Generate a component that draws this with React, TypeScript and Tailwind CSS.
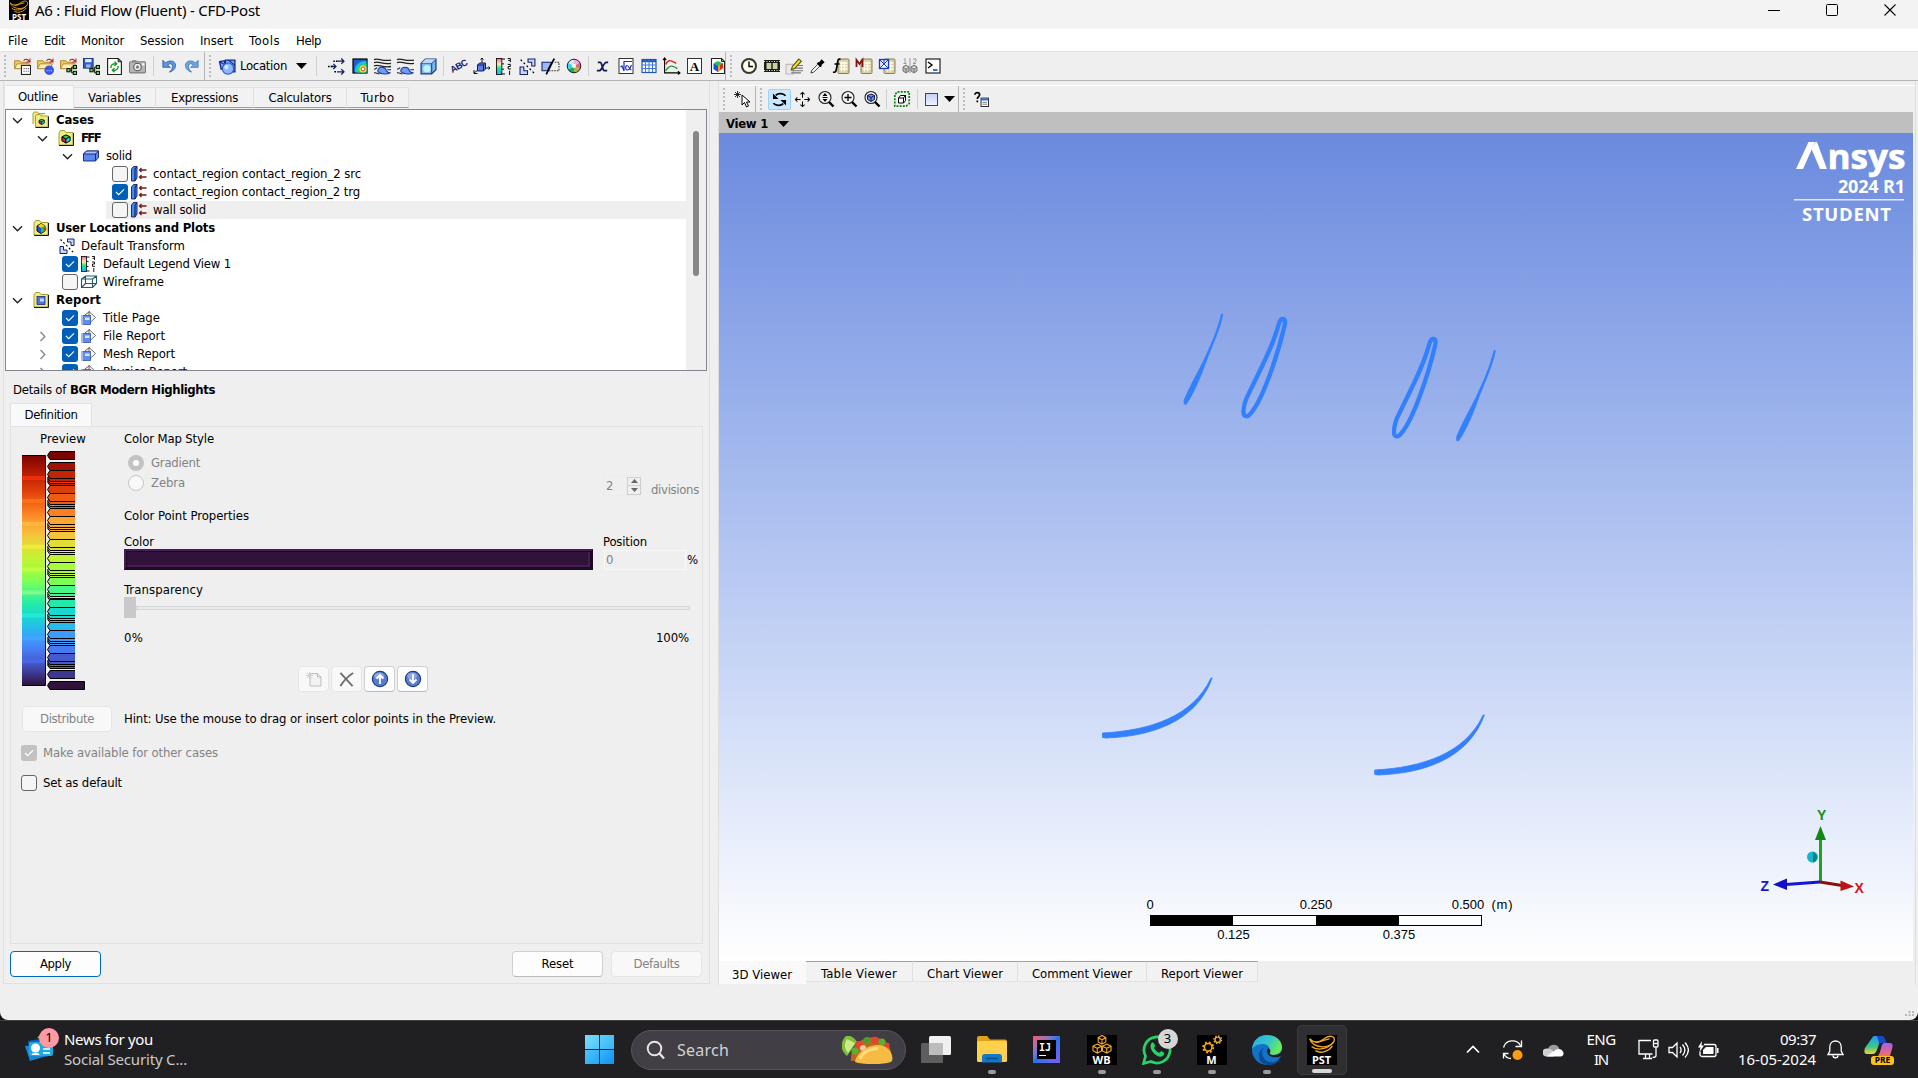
import { useLayoutEffect, useRef, useState, type ReactNode } from "react";

/* Text run that is tracked so that it fills a given width. */
function T({ w, children, className = "" }: { w?: number; children: string; className?: string }) {
  const ref = useRef<HTMLSpanElement>(null);
  const [ls, setLs] = useState(0);
  useLayoutEffect(() => {
    if (ref.current && w) {
      const range = document.createRange();
      range.selectNodeContents(ref.current);
      const natural = range.getBoundingClientRect().width - ls * children.length;
      setLs((w - natural) / children.length);
    }
  }, []);
  return (
    <span ref={ref} className={"inline-block shrink-0 whitespace-pre " + className} style={{ letterSpacing: ls }}>
      {children}
    </span>
  );
}

function Ico({ children, s = 17 }: { children: ReactNode; s?: number }) {
  return (
    <svg width={s} height={s} viewBox="0 0 16 16" fill="none" className="shrink-0 overflow-visible">
      {children}
    </svg>
  );
}

function Cell({ children }: { children: ReactNode }) {
  return <div className="flex w-[23px] shrink-0 items-center justify-center">{children}</div>;
}

function Sep({ className }: { className: string }) {
  return (
    <div className={"flex shrink-0 justify-center " + className}>
      <div className="h-5 w-px bg-[#cfcfcf]" />
    </div>
  );
}

function Grip() {
  return (
    <div className="flex h-6 w-[3px] shrink-0 flex-col justify-between py-[1px]">
      {[0, 1, 2, 3, 4, 5].map((i) => (
        <div key={i} className="h-[2px] w-[2px] bg-[#bcbcbc]" />
      ))}
    </div>
  );
}

function Caret() {
  return (
    <svg width="11" height="6" viewBox="0 0 11 6" className="shrink-0">
      <path d="M0 0H11L5.5 6Z" fill="#000" />
    </svg>
  );
}

const Folder = () => (
  <g>
    <path d="M0.5 2.5h5l1 1.500h6v6h-12z" fill="#f0c858" stroke="#a8832a" strokeWidth=".8" />
    <path d="M0.5 10L3 5.500h11.500L12 10z" fill="#ffeeb0" stroke="#a8832a" strokeWidth=".8" />
    <path d="M9 2.500c2-2 4-1.500 5.500 .8M15 0.500v3.200h-3.200" stroke="#c41616" />
  </g>
);
const Tree3 = () => (
  <g stroke="#000" strokeWidth=".9">
    <path d="M9 11.500h2M11 8.500v5.500M11 8.500h2M11 14h2" />
    <rect x="6.500" y="10" width="3" height="3" fill="#5ae05a" />
    <rect x="12.500" y="7" width="3" height="3" fill="#5ae05a" />
    <rect x="12.500" y="12.500" width="3" height="3" fill="#5ae05a" />
  </g>
);
const Sheet = () => (
  <g>
    <rect x="5" y="1" width="11" height="14.500" rx="1" fill="#d8d0a8" stroke="#8a8058" />
    <path d="M7 5h7.500M7 8h7.500M7 11h7.500M8.500 3.500v10M11.500 3.500v10" stroke="#fffbe6" strokeWidth="1.400" />
  </g>
);
const Swirl = ({ mid }: { mid: boolean }) => (
  <g>
    <path d="M0 1.500c4-2 7 2 16 .5M0 4.500c4-2.500 7 2 16 .5" stroke="#222" strokeWidth="1.200" />
    {mid && <path d="M0 7.500c4-2.500 7 2 16 .5" stroke="#222" strokeWidth="1.200" />}
    <path d="M3.500 12c1-4.500 7-4 8-.5 .8 2.500 3 2.500 4 2.500-4 2-11 1-12-2z" fill="#6f9cf6" stroke="#1c3f9e" />
    <path d="M0 10.500c1.500 0 2-.5 3-1.500M0 14c2-.5 3 1 5 1M12.500 11h3.500" stroke="#222" />
  </g>
);
const Transform = () => (
  <g>
    <path d="M8.500 1h6.500v6.500h-3v-3.500h-3.500z" fill="#c9d8fb" stroke="#14206b" />
    <path d="M1 8.500h3.500v3.500h3.500v3.500h-7z" fill="#c9d8fb" stroke="#14206b" />
    <path d="M1.500 1.500l13.500 13.500" stroke="#000" strokeDasharray="1.800 2.200" strokeWidth="1.200" />
  </g>
);
const Legend = () => (
  <g>
    <rect x="0.500" y="0.500" width="5" height="15" fill="url(#legendGrad)" stroke="#000" strokeWidth=".8" />
    <path d="M5.500 1h3M5.500 5.500h2M5.500 10.500h2M5.500 15h3" stroke="#000" strokeWidth=".9" />
    <path d="M11 .5h2.500v3.500M11.500 2.300h2M11 6h2.500v2h-2v2.300h2.500M12.800 12v4" stroke="#000" strokeWidth=".9" />
  </g>
);
const Lens = () => (
  <g>
    <circle cx="7" cy="6.500" r="6" fill="#f4f4f4" stroke="#222" strokeWidth="1.100" />
    <path d="M11 11l4.500 4.500" stroke="#000" strokeWidth="2.400" />
  </g>
);
const Cube = () => (
  <g stroke="#000" strokeWidth=".8">
    <path d="M8 5l4 1.800v4L8 13l-4-2.200v-4z" fill="#2a8" />
    <path d="M4 6.800L8 9v4l-4-2.200z" fill="#e21c5a" />
    <path d="M8 5l4 1.800L8 9 4 6.800z" fill="#2ed62e" />
    <path d="M12 6.800L8 9v4l4-2.200z" fill="#2bd3e8" />
  </g>
);
const YFolder = () => (
  <g>
    <path d="M1 3l1.500-2.500h4L8 2.500h7v12.500H1z" fill="#f1ea8a" stroke="#a8a22c" />
    <path d="M15.500 3v12.500H1" stroke="#000" strokeWidth=".9" />
  </g>
);
const Grid = () => (
  <g>
    <rect x="1" y="1.500" width="14" height="13" fill="#fff" stroke="#2456b4" strokeWidth="1.200" />
    <path d="M1 3h14" stroke="#2456b4" strokeWidth="2.500" />
    <path d="M1 7h14M1 10.500h14M4.500 2v12M8 2v12M11.500 2v12" stroke="#3b78d8" />
  </g>
);
const Page = () => (
  <g>
    <path d="M1.500 .5h10l3 3v12h-13z" fill="#fff" stroke="#222" strokeWidth="1.100" />
    <path d="M11.500 .5v3h3" stroke="#222" />
  </g>
);

function LeftTools() {
  return (
    <>
      <Cell><Ico><Folder /><rect x="7" y="7" width="8.500" height="8.500" fill="#fff" stroke="#222" /><path d="M9 10h5M9 12.500h5" stroke="#555" strokeDasharray="1 1" /></Ico></Cell>
      <Cell><Ico><Folder /><circle cx="11.500" cy="11.500" r="4.500" fill="#3a55e8" /><path d="M9 12h5" stroke="#cfe0ff" strokeDasharray="1 1" /></Ico></Cell>
      <Cell><Ico><Folder /><Tree3 /></Ico></Cell>
      <Cell><Ico><rect x=".5" y=".5" width="9" height="9" fill="#3460bd" stroke="#1d3f86" /><rect x="2" y="1" width="6" height="3" fill="#dfe9ff" /><rect x="3" y="6" width="4" height="3" fill="#9db8ee" /><Tree3 /></Ico></Cell>
      <Cell><Ico><Page /><path d="M4.500 9.500c0-3 2-4.500 5-4M8 3.500l2 2-2 2M11.500 7.500c0 3-2 4.500-5 4M8 9.500l-2 2 2 2" stroke="#169a28" strokeWidth="1.300" /></Ico></Cell>
      <Cell><Ico><rect x=".5" y="3.500" width="15" height="10.500" rx="1" fill="#b5b5b5" stroke="#7d7d7d" /><rect x="3" y="2" width="4" height="2" fill="#888" /><circle cx="8" cy="8.500" r="3.500" fill="#efefef" stroke="#555" /><circle cx="8" cy="8.500" r="1.500" fill="#777" /><rect x="12.500" y="5" width="2" height="2" fill="#fff" /></Ico></Cell>
    </>
  );
}

function Toolbar() {
  return (
    <div className="flex h-[30px] w-full shrink-0 items-center border-t border-b border-t-[#e2e2e2] border-b-[#b4b4b4] bg-[#efefef]">
      <div className="flex h-full w-[205px] items-center border-r border-[#b4b4b4] pl-[4px]">
        <Grip />
        <div className="w-[4px] shrink-0" />
        <LeftTools />
        <Sep className="w-[8px]" />
        <Cell><Ico s={14}><path d="M1 1.500v8h8.500L6.500 7C9 4.500 12 5 12 8.500c0 2.500-1.500 4.500-3.500 6.500 5-1.500 7-4.500 7-7.500C15.500 2 9 .5 4 4.500z" fill="#5d97dd" stroke="#2356a0" strokeWidth=".9" /></Ico></Cell>
        <Cell><Ico s={14}><path d="M15 1.500v8H6.500L9.500 7C7 4.500 4 5 4 8.500c0 2.500 1.500 4.500 3.500 6.500-5-1.500-7-4.500-7-7.500C.5 2 7 .5 12 4.500z" fill="#6ea6dc" stroke="#3a76ae" strokeWidth=".9" /></Ico></Cell>
      </div>
      <div className="flex h-full w-[521px] items-center border-r border-[#b4b4b4] pl-[4px]">
        <Grip />
        <div className="w-[7px] shrink-0" />
        <Ico><path d="M.5 3.500L5 2.500l1.500 7-4.500 1zM6 2h9v11H6z" fill="#7ba4f5" stroke="#0e2a86" strokeWidth="1.200" /><path d="M.5 3.500L5 6M9 2l6 5" stroke="#0e2a86" /><circle cx="8.500" cy="10" r="5.300" fill="#8db6ff" stroke="#2a56c4" /><circle cx="7" cy="8.500" r="2" fill="#d8e7ff" /></Ico>
        <T w={47} className="mr-[9px] ml-[4px]">Location</T>
        <Caret />
        <Sep className="w-[18px]" />
        <Cell><Ico><path d="M3 8h4.500M5 5.500L7.500 8 5 10.500M9 3h6M12.500 .5L15 3l-2.500 2.500M9 13h6M12.500 10.500L15 13l-2.500 2.500" stroke="#14206b" strokeWidth="1.200" /><path d="M0 8h4M5 3h4M6 13h3" stroke="#000" strokeDasharray="1.500 1" strokeWidth="1.300" /></Ico></Cell>
        <Cell><Ico s={16}><rect x="1" y="1" width="14" height="14" fill="#1e5fd0" stroke="#000" strokeWidth="1.200" /><path d="M3 14.500C2 7 7 3 14.500 3v11.500z" fill="#19c4d8" /><path d="M5.500 14.500C5 9 9 6 14.500 6v8.500z" fill="#3edb4a" /><circle cx="11" cy="11" r="3.500" fill="#f6e642" /><circle cx="11" cy="11" r="2" fill="#fff" stroke="#e0392a" /></Ico></Cell>
        <Cell><Ico><Swirl mid /></Ico></Cell>
        <Cell><Ico><Swirl mid={false} /></Ico></Cell>
        <Cell><Ico><path d="M1 5l4-4h10v10l-4 4H1z" fill="#7cb8ee" stroke="#1c3f8e" strokeWidth="1.200" /><path d="M1 5h10v10M11 5l4-4" stroke="#1c3f8e" /><circle cx="6.500" cy="10" r="3.500" fill="#c3f0fb" /><path d="M5 1h10l-4 4H1z" fill="#d5ecfb" opacity=".7" /></Ico></Cell>
        <Sep className="w-[7px]" />
        <Cell><span className="block -rotate-[28deg] font-['Liberation_Sans'] text-[9px] leading-none font-bold tracking-[-0.5px] text-[#14146e]">ABC</span></Cell>
        <Cell><Ico s={16}><path d="M8 5V0M6.500 1.500L8 0l1.500 1.500M11 10h5M14.500 8.500L16 10l-1.500 1.500M4 12l-4 3M0 12v3.500h3.500" stroke="#111" /><path d="M3.500 7l2-2h6v6l-2 2h-6z" fill="#5c80e6" stroke="#0e1e6b" /><path d="M3.500 7h6v6M9.500 7l2-2" stroke="#0e1e6b" /></Ico></Cell>
        <Cell><Ico><Legend /></Ico></Cell>
        <Cell><Ico><Transform /></Ico></Cell>
        <Cell><Ico><path d="M0 4h9l-4 8H0z" fill="#9db9f5" stroke="#14206b" /><path d="M12 4h4v8H6" stroke="#333" strokeDasharray="1.500 1" /><path d="M11.500 .5L4 15.500" stroke="#000" strokeWidth="1.600" /></Ico></Cell>
        <Cell>
          <Ico s={16}>
            <path d="M8 8L8 1A7 7 0 0 1 14 4.500z" fill="#f7a8e0" /><path d="M8 8L14 4.500A7 7 0 0 1 14 11.500z" fill="#f06080" /><path d="M8 8L14 11.500A7 7 0 0 1 8 15z" fill="#a8b844" /><path d="M8 8V15A7 7 0 0 1 2 11.500z" fill="#18a878" /><path d="M8 8L2 11.500A7 7 0 0 1 2 4.500z" fill="#38d8f0" /><path d="M8 8L2 4.500A7 7 0 0 1 8 1z" fill="#c8f0e8" /><circle cx="8" cy="8" r="6.800" stroke="#222" /><circle cx="8" cy="8" r="2" fill="#fff" />
          </Ico>
        </Cell>
        <Sep className="w-[6px]" />
        <Cell><Ico s={15}><path d="M3 3.500h2.500c2.500 0 2 9 4.500 9H13M14 3.500h-2C9 3.500 7.500 12.500 4.500 12.500H2" stroke="#101a50" strokeWidth="1.900" /></Ico></Cell>
        <Cell><Ico s={16}><rect x="1" y=".5" width="14" height="15" fill="#fff" stroke="#333" /><path d="M2.500 9l1.500-1 2 5V3.500h8" stroke="#1c30c8" strokeWidth="1.200" /><path d="M13.500 7c-2 5-3 5-4.500 5s-2-4.500 0-4.500 2.500 4.500 4.500 4.500" stroke="#1c30c8" strokeWidth="1.200" /></Ico></Cell>
        <Cell><Ico s={16}><Grid /></Ico></Cell>
        <Cell><Ico><path d="M1.500 0v14H16M0 2l1.500-2L3 2M14 12.500l2 1.500-2 1.500" stroke="#000" /><path d="M2.500 6c3-6 6-3 10-1" stroke="#d22" strokeWidth="1.300" /><path d="M2.500 12c4-6 7-5 11-2" stroke="#1a9a3a" strokeWidth="1.300" /></Ico></Cell>
        <Cell><div className="flex h-[16px] w-[15px] items-center justify-center border border-[#333] bg-white font-['Liberation_Serif'] text-[13px] leading-none font-bold">A</div></Cell>
        <Cell><Ico s={16}><Page /><path d="M4 5l4-2 4 2v6l-4 3-4-3z" fill="#1ec84a" /><path d="M3.500 5.500L8 8v6l-4.500-3z" fill="#1c50e0" /><path d="M8 8l5-3v5l-5 4z" fill="#f2a01c" /><path d="M10 7l3-2v5l-3 2z" fill="#e0281c" /></Ico></Cell>
      </div>
      <div className="flex h-full items-center pl-[4px]">
        <Grip />
        <div className="w-[4px] shrink-0" />
        <Cell><Ico s={16}><circle cx="8" cy="8" r="7" fill="#fffdf0" stroke="#3a3628" strokeWidth="2" /><path d="M8 3.500V8.500h4" stroke="#000" strokeWidth="1.400" /></Ico></Cell>
        <Cell><Ico s={16}><rect x="0" y="2" width="16" height="12" fill="#1c1c14" /><rect x="2.500" y="5" width="4.800" height="6" fill="#c9cfa6" /><rect x="8.700" y="5" width="4.800" height="6" fill="#c9cfa6" /><path d="M0 3.500h16M0 12.500h16" stroke="#e8e8d8" strokeDasharray="1 1.500" /></Ico></Cell>
        <Cell><Ico><path d="M0 6h7v9H0z" fill="#e8e8e8" stroke="#bbb" /><path d="M8 7h8M8 9.500h8M5 12h11M5 14h9" stroke="#777" /><path d="M5 11l1-3 6-7 2.500 2-6.500 7z" fill="#f4e21c" stroke="#5a5210" /></Ico></Cell>
        <Cell><Ico s={15}><path d="M1 15l1-3 6.500-6.500 2 2L4 14z" fill="#fff" stroke="#333" /><path d="M8 4l4 4M10 5l2.500-3 1.500 1.500L11 6z" stroke="#000" strokeWidth="2.200" /></Ico></Cell>
        <Cell><Ico s={16}><Sheet /><path d="M7.500 1.500C4.500 0 5 3 4 8s-1 7-4 6M1.500 6h5" stroke="#000" strokeWidth="1.700" /></Ico></Cell>
        <Cell><Ico s={16}><Sheet /><path d="M.5 9V2l3 4 3-4v7" stroke="#8a1010" strokeWidth="1.800" /></Ico></Cell>
        <Cell><Ico s={16}><Sheet /><rect x=".5" y="1.500" width="9" height="9" fill="#e8efff" stroke="#1c3cc8" strokeWidth="1.300" /><path d="M.5 1.500l9 9M9.500 1.500L5 6l-4.500 4.500M5 1.500V6" stroke="#1c3cc8" /></Ico></Cell>
        <Cell><Ico s={16}><path d="M2 1.500L3 .5v5M1.500 5.500h3M11 1h3v2l-3 2.500h3M8 0v15" stroke="#999" /><path d="M1 9l3-2 3 2v4l-3 2-3-2zM9 9l3-2 3 2v4l-3 2-3-2zM1 9l3 2 3-2M4 11v4M9 9l3 2 3-2M12 11v4" stroke="#777" fill="#bbb" /></Ico></Cell>
        <Cell><Ico s={16}><rect x="1" y="1" width="14" height="14" fill="#fff" stroke="#222" strokeWidth="1.200" /><path d="M3 4l4 3-4 3" stroke="#000" strokeWidth="1.400" /><path d="M8 12h4.500" stroke="#1466d8" strokeWidth="1.800" /></Ico></Cell>
      </div>
    </div>
  );
}

function Check({ on }: { on?: boolean }) {
  return on ? (
    <div className="flex h-4 w-4 shrink-0 items-center justify-center rounded-[3px] bg-[#005fb8]">
      <svg width="10" height="8" viewBox="0 0 10 8" fill="none"><path d="M1 4l2.700 2.700L9 1.300" stroke="#fff" strokeWidth="1.100" /></svg>
    </div>
  ) : (
    <div className="h-4 w-4 shrink-0 rounded-[3px] border border-[#666] bg-[#f5f5f5]" />
  );
}

function Chevron({ open }: { open: boolean }) {
  return (
    <svg width="11" height="11" viewBox="0 0 11 11" fill="none" className="shrink-0">
      <path d={open ? "M1 3.200l4.500 4.500L10 3.200" : "M3.500 1l4.300 4.500-4.300 4.500"} stroke={open ? "#222" : "#888"} strokeWidth="1.400" />
    </svg>
  );
}

const ICONS: Record<string, ReactNode> = {
  cases: <g><path d="M0 12V1.500L1 0h3.500l1 1.500H12" fill="#f1ea8a" stroke="#a8a22c" /><path d="M2.500 4l1-1.500H7L8 4h7v11H2.500z" fill="#f1ea8a" stroke="#a8a22c" /><path d="M15.500 4.500v11h-13" stroke="#000" strokeWidth=".9" /><g transform="translate(3.500 4) scale(.65)"><Cube /></g></g>,
  fff: <g><YFolder /><Cube /></g>,
  user: <g><YFolder /><path d="M4 6l4-2.500L12 6v5l-4 2.500L4 11z" fill="#1c50e0" stroke="#000" strokeWidth=".9" /><path d="M8 3.500L12 6 8 8 5 6z" fill="#f2d01c" /><path d="M8 8l4-2v5l-4 2z" fill="#1ec84a" /><circle cx="12" cy="9" r="1.500" fill="#e0281c" /></g>,
  report: <g><YFolder /><rect x="4" y="4.500" width="8" height="8" fill="#4878e0" stroke="#1c2f86" strokeWidth=".8" /><rect x="7" y="6.500" width="4" height="3" fill="#c7d8fb" /></g>,
  solid: <g stroke="#14206b" strokeWidth=".9"><path d="M.5 6l3-3h12v6.500l-3 3.500H.5z" fill="#5c88f0" /><path d="M.5 6l3-3h12l-3 3z" fill="#a9c4fa" /><path d="M12.500 6v7" /></g>,
  wall: <g><path d="M.5 3l2-2.500h3.500v11.500l-2 3H.5z" fill="#4a8af4" stroke="#0e1e5b" strokeWidth=".9" /><path d="M4 3v12M4 3l2-2.500" stroke="#0e1e5b" strokeWidth="1.100" /><path d="M8.500 4h7M8.500 11h7M10.500 2L8.500 4l2 2M10.500 9l-2 2 2 2" stroke="#7a1616" strokeWidth="1.300" /></g>,
  transform: <Transform />,
  legend: <Legend />,
  wire: <g stroke="#245a63" strokeWidth="1.100"><path d="M.5 5l4-3h11v7.500l-4 4H.5zM.5 5h11v8.500M11.500 5l4-3M4.500 2v7.500h11M4.500 9.500l-4 4" /></g>,
  page: <g><path d="M8 1.500l6.500 6-6.500 6z" fill="#fff" stroke="#555" strokeWidth=".9" /><path d="M8.500 1.500L4 5" stroke="#555" /><rect x="1" y="5.500" width="8.500" height="9" fill="#5f8cec" stroke="#2f56b4" strokeWidth=".8" /><path d="M1.500 5.500v9.500" stroke="#fff" strokeDasharray="1 1" /><rect x="4" y="7.500" width="4.500" height="2.500" fill="#dbe6fd" /></g>,
};

type Row = { pad: string; chev?: boolean; chevGap?: string; check?: boolean; icon: string; text: string; w: number; bold?: boolean; hl?: boolean };
const ROWS: Row[] = [
  { pad: "pl-[6px]", chev: true, icon: "cases", text: "Cases", w: 38, bold: true },
  { pad: "pl-[31px]", chev: true, icon: "fff", text: "FFF", w: 19, bold: true },
  { pad: "pl-[56px]", chev: true, icon: "solid", text: "solid", w: 26 },
  { pad: "pl-[106px]", check: false, icon: "wall", text: "contact_region contact_region_2 src", w: 208 },
  { pad: "pl-[106px]", check: true, icon: "wall", text: "contact_region contact_region_2 trg", w: 207 },
  { pad: "pl-[6px]", check: false, icon: "wall", text: "wall solid", w: 53, hl: true },
  { pad: "pl-[6px]", chev: true, icon: "user", text: "User Locations and Plots", w: 159, bold: true },
  { pad: "pl-[53px]", icon: "transform", text: "Default Transform", w: 104 },
  { pad: "pl-[56px]", check: true, icon: "legend", text: "Default Legend View 1", w: 128 },
  { pad: "pl-[56px]", check: false, icon: "wire", text: "Wireframe", w: 61 },
  { pad: "pl-[6px]", chev: true, icon: "report", text: "Report", w: 45, bold: true },
  { pad: "pl-[56px]", check: true, icon: "page", text: "Title Page", w: 57 },
  { pad: "pl-[31px]", chev: false, chevGap: "w-[14px]", check: true, icon: "page", text: "File Report", w: 62 },
  { pad: "pl-[31px]", chev: false, chevGap: "w-[14px]", check: true, icon: "page", text: "Mesh Report", w: 72 },
  { pad: "pl-[31px]", chev: false, chevGap: "w-[14px]", check: true, icon: "page", text: "Physics Report", w: 84 },
];

function Outline() {
  return (
    <div className="mx-px flex h-[262px] w-[702px] shrink-0 overflow-hidden border border-[#828790] bg-white">
      <div className="w-[680px] shrink-0 pt-px">
        {ROWS.map((r) => (
          <div key={r.text} className={"flex h-[18px] items-center " + (r.hl ? "ml-[100px] bg-[#efefef] " : "") + r.pad}>
            {r.chev !== undefined && <Chevron open={r.chev} />}
            {r.chev !== undefined && <div className={r.chevGap ?? "w-[10px]"} />}
            {r.check !== undefined && <Check on={r.check} />}
            <div className={r.check !== undefined ? "mr-[6px] ml-[3px]" : r.chev ? "mr-[7px]" : "mr-[6px]"}><Ico s={16}>{ICONS[r.icon]}</Ico></div>
            <T w={r.w} className={r.bold ? "font-bold" : ""}>{r.text}</T>
          </div>
        ))}
      </div>
      <div className="flex grow justify-center bg-[#efefef] pt-[21px]">
        <div className="h-[145px] w-[6px] rounded-[3px] bg-[#868686]" />
      </div>
    </div>
  );
}

function Tab({ children, w, className }: { children: string; w: number; className: string }) {
  return (
    <div className={"flex h-[21px] items-center justify-center border-t border-r border-b bg-[#f2f2f2] " + className}>
      <T w={w}>{children}</T>
    </div>
  );
}

const RAMP = ["#7a0403", "#a11201", "#c32503", "#dd3d08", "#f05b12", "#fb8022", "#fea431", "#f4c53a", "#dfdf37", "#c1f334", "#a4fc3c", "#7dff56", "#46f884", "#23eaac", "#18d9cb", "#28bbec", "#3e9bfe", "#467af3", "#455bcd", "#3e378f", "#30123b"];
const BANDS = ["#ff3010", "#ff7a1c", "#ffc040", "#f4f038", "#c8ff48", "#94ff90", "#24f0dc", "#44a8ff", "#4c68f0"];

function Preview() {
  const body = (y: number, h: number, c: string, key: string) => (
    <path key={key} d={`M75 ${y + 0.5}H50L47.500 ${y + h / 2}L50 ${y + h - 0.5}H75`} fill={c} stroke="#000" />
  );
  return (
    <svg width="68" height="242" viewBox="22 450 68 242" fill="none" className="mt-[-2px] ml-[11px]">
      <defs>
        <linearGradient id="ramp" x1="0" y1="0" x2="0" y2="1">
          {RAMP.map((c, i) => (
            <stop key={c} offset={i / (RAMP.length - 1)} stopColor={c} />
          ))}
        </linearGradient>
      </defs>
      <rect x="22" y="455" width="23" height="230" fill="url(#ramp)" />
      {BANDS.map((c, i) => (
        <rect key={c} x="22" y={476 + i * 22.9} width="23" height="4" fill={c} opacity=".75" />
      ))}
      <path d="M22 455.500h23.500v230H22" stroke="#000" />
      {body(451, 9, RAMP[0], "first")}
      {BANDS.map((c, i) => {
        const y = Math.round(462 + i * 22.9);
        const a = RAMP[1 + i * 2];
        const b = RAMP[2 + i * 2];
        return (
          <g key={c}>
            {[22, 20, 18].map((d, j) => body(y + d - 6, 8, j % 2 ? c : b, String(d)))}
            {body(y + 8, 9, b, "b")}
            {body(y, 9, a, "a")}
          </g>
        );
      })}
      {body(670, 9, "#3e378f", "p")}
      <path d="M84.500 681.500H50L47.500 685.500L50 689.500H84.500Z" fill="#30123b" stroke="#000" />
    </svg>
  );
}

function Btn({ children, className = "", dim }: { children: ReactNode; className?: string; dim?: boolean }) {
  return (
    <div className={"flex h-[26px] shrink-0 items-center justify-center rounded-[4px] border " + (dim ? "border-[#e6e6e6] bg-[#f8f8f8] text-[#838383] " : "border-[#d0d0d0] border-b-[#bababa] bg-[#fdfdfd] ") + className}>
      {children}
    </div>
  );
}

function RoundArrow({ d }: { d: string }) {
  return (
    <svg width="18" height="18" viewBox="0 0 18 18" fill="none">
      <circle cx="9" cy="9" r="7.600" fill="#5a7cd0" stroke="#1d3c86" strokeWidth="1.200" />
      <ellipse cx="8" cy="6" rx="5" ry="3.500" fill="#9fb6ee" opacity=".7" />
      <path d={d} stroke="#fff" strokeWidth="1.800" />
    </svg>
  );
}

function Details() {
  return (
    <div className="flex flex-1 flex-col pl-px">
      <div className="flex h-[32px] shrink-0 items-center gap-[4px] pt-[6px] pl-[8px]">
        <T w={53}>Details of</T>
        <T w={145} className="font-bold">BGR Modern Highlights</T>
      </div>
      <div className="ml-[5px] flex h-[23px] w-[82px] shrink-0 items-center justify-center border border-b-0 border-[#e2e2e2] bg-[#f9f9f9]">
        <T w={53}>Definition</T>
      </div>
      <div className="ml-[5px] flex h-[518px] w-[693px] shrink-0 flex-col border border-[#e2e2e2]">
        <div className="flex">
          <div className="flex w-[113px] shrink-0 flex-col items-start">
            <T w={46} className="ml-[29px] h-[25px] leading-[24px]">Preview</T>
            <Preview />
          </div>
          <div className="flex w-[577px] shrink-0 flex-col">
            <div className="flex h-[67px]">
              <div className="flex grow flex-col items-start">
                <T w={90} className="h-[26px] leading-[24px]">Color Map Style</T>
                <div className="flex h-[20px] items-center gap-[7px] pl-[4px] text-[#838383]">
                  <div className="h-4 w-4 rounded-full border-[5px] border-[#c2c2c2] bg-white" />
                  <T w={49}>Gradient</T>
                </div>
                <div className="flex h-[20px] items-center gap-[7px] pl-[4px] text-[#838383]">
                  <div className="h-4 w-4 rounded-full border border-[#c6c6c6] bg-[#f8f8f8]" />
                  <T w={34}>Zebra</T>
                </div>
              </div>
              <div className="flex items-start gap-[9px] pt-[48px] pr-[2px] text-[#838383]">
                <div className="flex h-[21px] w-[39px] items-center justify-between border border-[#ececec] pl-[2px]">
                  <span>2</span>
                  <div className="flex h-[18px] w-[14px] flex-col border border-[#cfcfcf]">
                    <div className="flex flex-1 items-center justify-center border-b border-[#cfcfcf]"><svg width="7" height="4"><path d="M0 4h7L3.500 0z" fill="#666" /></svg></div>
                    <div className="flex flex-1 items-center justify-center"><svg width="7" height="4"><path d="M0 0h7L3.500 4z" fill="#666" /></svg></div>
                  </div>
                </div>
                <T w={48} className="pt-[7px]">divisions</T>
              </div>
            </div>
            <T w={125} className="mt-[11px] h-[20px] self-start leading-[22px]">Color Point Properties</T>
            <div className="mt-[6px] flex h-[18px]">
              <T w={30} className="leading-[22px]">Color</T>
              <T w={44} className="ml-[449px] leading-[22px]">Position</T>
            </div>
            <div className="flex h-[21px] items-center">
              <div className="h-[21px] w-[469px] border-2 border-t-[#451c56] border-r-[#1c0a22] border-b-[#1c0a22] border-l-[#451c56] bg-[#1c0a22] p-px">
                <div className="h-full w-full border-r-2 border-b-2 border-[#451c56] bg-[#30123b]" />
              </div>
              <div className="ml-[11px] flex h-[20px] w-[82px] items-center border border-[#f8f8f8] pt-px pl-px text-[#838383]">0</div>
              <T w={12} className="ml-[1px] pt-px">%</T>
            </div>
            <T w={79} className="mt-[10px] h-[18px] self-start leading-[20px]">Transparency</T>
            <div className="mt-[-1px] flex h-[21px] w-[566px] items-center">
              <div className="h-[21px] w-[12px] bg-[#c9c9c9]" />
              <div className="h-[4px] grow border border-[#d3d6d6] bg-[#e7eaea]" />
            </div>
            <div className="mt-[10px] flex h-[20px] w-[565px] items-center justify-between">
              <T w={19}>0%</T>
              <T w={33}>100%</T>
            </div>
            <div className="mt-[18px] ml-[174px] flex gap-[2px]">
              <Btn dim className="w-[31px]"><Ico s={16}><path d="M4 2.500h7.500l3.500 3.500v9H4z" fill="#f3f3f3" stroke="#bdbdbd" /><path d="M11.500 2.500v3.500h3.500" stroke="#bdbdbd" /><path d="M3.500 1v7M0 4.500h7M1 2l5 5M6 2L1 7" stroke="#d0d0d0" /></Ico></Btn>
              <Btn dim className="w-[31px]"><Ico s={15}><path d="M1.500 1l13 14M15 1C9 5 5 9 1.500 15" stroke="#6e6e6e" strokeWidth="2" /></Ico></Btn>
              <Btn className="w-[31px]"><RoundArrow d="M9 14V5M5.500 8.500L9 5l3.500 3.500" /></Btn>
              <Btn className="w-[31px]"><RoundArrow d="M9 4v9M5.500 9.500L9 13l3.500-3.500" /></Btn>
            </div>
          </div>
        </div>
        <div className="mt-[14px] ml-[11px] flex items-center">
          <Btn dim className="w-[90px]"><T w={54}>Distribute</T></Btn>
          <T w={372} className="ml-[12px]">Hint: Use the mouse to drag or insert color points in the Preview.</T>
        </div>
        <div className="mt-[12px] ml-[10px] flex h-[18px] items-center gap-[6px] text-[#838383]">
          <div className="flex h-4 w-4 items-center justify-center rounded-[3px] bg-[#c2c2c2]">
            <svg width="10" height="8" viewBox="0 0 10 8" fill="none"><path d="M1 4l2.700 2.700L9 1.300" stroke="#fff" strokeWidth="1.300" /></svg>
          </div>
          <T w={175}>Make available for other cases</T>
        </div>
        <div className="mt-[12px] ml-[10px] flex h-[18px] items-center gap-[6px]">
          <Check />
          <T w={79}>Set as default</T>
        </div>
      </div>
      <div className="mt-[7px] ml-[5px] flex">
        <Btn className="w-[91px] !border-[#0067c0]"><T w={31}>Apply</T></Btn>
        <Btn className="ml-[411px] w-[91px]"><T w={32}>Reset</T></Btn>
        <Btn dim className="ml-[8px] w-[91px]"><T w={46}>Defaults</T></Btn>
      </div>
    </div>
  );
}

const BLADE = "M1221.500 314h1.300C1221 326 1213 344 1207 359C1201 376 1194 393 1186 404.500L1184.200 404V400C1190 386 1196 376 1203 362C1211 345 1217 332 1221.500 314z";
const LOOP = "M1282.500 319C1279 319 1279 325 1276 333C1270 352 1258 374 1249 393C1244 402 1243.500 407 1243.500 412C1243.500 417 1247.500 418 1251 413C1263 399 1278 354 1284.500 326C1285.500 322 1285.500 319 1282.500 319z";
const ARC = "M1102.500 733C1150 730.500 1193 716.500 1211 678H1212.200C1196 722.500 1150 736.500 1106 738L1102.500 737.500z";

function Viewer() {
  return (
    <svg width="1194" height="828" viewBox="719 133 1194 828" className="block shrink-0 bg-gradient-to-b from-[#6b8ade] to-white font-['Liberation_Sans'] text-[13px]">
      <g fill="#3380ff" stroke="#3380ff" strokeWidth=".8">
        <path d={BLADE} />
        <path d={BLADE} transform="translate(272.500 36.500)" />
        <path d={ARC} />
        <path d={ARC} transform="translate(272.200 37)" />
      </g>
      <g fill="none" stroke="#3380ff" strokeWidth="4.300">
        <path d={LOOP} />
        <path d={LOOP} transform="translate(150.500 20)" />
      </g>
      <g fill="#fff">
        <path d="M1796 169L1808.500 142h6.500L1803 169z" />
        <path d="M1811.500 149L1815.500 142h1.500L1827 169h-7z" />
        <rect x="1794" y="199" width="110" height="1.500" fill="#dfe6fa" />
        <g className="font-['Open_Sans'] font-bold">
          <text x="1827.500" y="169" fontSize="34" textLength="78" lengthAdjust="spacingAndGlyphs" stroke="#fff" strokeWidth=".6">nsys</text>
          <text x="1838" y="192.500" fontSize="18" textLength="67">2024 R1</text>
          <text x="1802" y="221" fontSize="18.500" textLength="89">STUDENT</text>
        </g>
      </g>
      <g>
        <text x="1150" y="909" textAnchor="middle">0</text>
        <text x="1316" y="909" textAnchor="middle">0.250</text>
        <text x="1468" y="909" textAnchor="middle">0.500</text>
        <text x="1502" y="909" textAnchor="middle" textLength="21">(m)</text>
        <text x="1233.500" y="939" textAnchor="middle">0.125</text>
        <text x="1399" y="939" textAnchor="middle">0.375</text>
        <rect x="1150.500" y="915.500" width="331" height="10" fill="#fff" fillOpacity=".6" stroke="#000" />
        <rect x="1150" y="915" width="83" height="11" />
        <rect x="1316" y="915" width="83" height="11" />
      </g>
      <g strokeWidth="3">
        <circle cx="1812.500" cy="857" r="5.500" fill="#12b8c8" />
        <path d="M1813 852a5.500 5.500 0 0 1 0 10.500z" fill="#0a7c88" />
        <path d="M1820.500 882V838" stroke="#22a022" />
        <path d="M1815 840L1820.500 826L1826 840z" fill="#118a11" />
        <path d="M1820 882L1786 884.500" stroke="#1414d8" />
        <path d="M1787 878.500L1773 884.500L1787 890z" fill="#1010c8" />
        <path d="M1820 882L1842 885.500" stroke="#8a1010" />
        <path d="M1840.500 880.500L1854 886.500L1840.500 891z" fill="#c01010" />
        <g className="font-bold" fontSize="14">
          <text x="1817" y="819.500" fill="#189018">Y</text>
          <text x="1760.500" y="891" fill="#1414d8">Z</text>
          <text x="1854.500" y="893" fill="#d81414">X</text>
        </g>
      </g>
    </svg>
  );
}

function ViewerPane() {
  return (
    <div className="ml-[8px] flex w-[1198px] flex-col border-r border-l border-[#dedede] pt-[4px]">
      <div className="flex h-[27px] shrink-0 items-center border-t border-white bg-[#efefef]">
        <div className="flex h-full w-[37px] items-center border-r border-[#b4b4b4] pl-[4px]">
          <Grip />
          <div className="ml-[8px]"><Ico s={16}><path d="M3.500 0v7M0 3.500h7M1 1l5 5M6 1L1 6" stroke="#000" strokeWidth=".8" /><path d="M8 4v10l2.500-2.500 2 4.500 2-1-2-4h3.500z" fill="#fff" stroke="#000" /></Ico></div>
        </div>
        <div className="flex h-full w-[203px] items-center border-r border-[#b4b4b4] pl-[4px]">
          <Grip />
          <div className="ml-[5px] flex h-[21px] w-[23px] shrink-0 items-center justify-center rounded-[2px] border border-[#99d1ff] bg-[#cce8ff]">
            <Ico s={15}><path d="M4 3.500C7 .5 12 1.500 14.500 4M12 12.500C9 15.500 4 14.500 1.500 12" stroke="#000" strokeWidth="1.800" /><path d="M1 1.500v6h6zM15 14.500v-6H9z" fill="#000" /></Ico>
          </div>
          <Cell><Ico s={15}><path d="M8 0v6M8 10v6M0 8h6M10 8h6M5.800 2.500L8 .5l2.200 2M5.800 13.500L8 15.500l2.200-2M2.500 5.800L.5 8l2 2.200M13.500 5.800l2 2.200-2 2.200" stroke="#000" strokeWidth="1.100" /></Ico></Cell>
          <Cell><Ico s={16}><Lens /><path d="M7 2l2.500 3h-5zM7 11l2.500-3h-5z" fill="#000" /><path d="M4.500 6.500h5" stroke="#000" /></Ico></Cell>
          <Cell><Ico s={16}><Lens /><path d="M7 3v7M3.500 6.500h7" stroke="#000" strokeWidth="1.300" /></Ico></Cell>
          <Cell><Ico s={16}><Lens /><path d="M7 3l3.500 1.500v4L7 10.500 3.500 8.500v-4z" fill="#6a90f0" stroke="#101c60" /><path d="M3.500 4.500L7 6.500l3.500-2M7 6.500v4" stroke="#101c60" /></Ico></Cell>
          <Sep className="w-[7px]" />
          <Cell><Ico s={16}><path d="M3.500 .8h11.700v11.700l-3 2.700H.8V3.500z" stroke="#0c860c" strokeWidth="1.700" strokeDasharray="2 1.200" /><path d="M4.500 7l2-2.500h5v5l-2 2.500h-5zM4.500 7h5v5M9.500 7l2-2.500" fill="#fff" stroke="#000" /></Ico></Cell>
          <Sep className="w-[8px]" />
          <div className="ml-[4px] h-[13px] w-[13px] shrink-0 border border-[#444] bg-gradient-to-b from-[#c4d0f4] to-[#eef2fd]" />
          <div className="ml-[6px]"><Caret /></div>
        </div>
        <div className="flex h-full items-center pl-[4px]">
          <Grip />
          <div className="ml-[8px]"><Ico s={15}><path d="M1 3c0-3 5-3 5 0 0 2-2.500 2-2.500 4.500M3.500 9v2" stroke="#000" strokeWidth="1.800" /><rect x="7.500" y="6.500" width="8" height="9" fill="#fff" stroke="#222" /><path d="M7.500 8h8" stroke="#1474d8" strokeWidth="2" /><path d="M9 11h5M9 13h5" stroke="#555" strokeWidth=".8" /></Ico></div>
        </div>
      </div>
      <div className="flex h-[21px] w-[1194px] shrink-0 items-center bg-[#bfbfbf] pt-[2px] pl-[7px]">
        <T w={42} className="mr-[10px] font-bold">View 1</T>
        <Caret />
      </div>
      <Viewer />
      <div className="flex h-[23px] shrink-0 items-start">
        <div className="flex h-[23px] w-[87px] items-center justify-center bg-[#f9f9f9] pt-[4px] pr-px"><T w={60}>3D Viewer</T></div>
        <Tab className="w-[107px] border-t-[#a0a0a0] border-r-[#e0e0e0] border-b-[#e3e3e3] pt-[5px]" w={76}>Table Viewer</Tab>
        <Tab className="w-[105px] border-t-[#a0a0a0] border-r-[#e0e0e0] border-b-[#e3e3e3] pt-[5px]" w={76}>Chart Viewer</Tab>
        <Tab className="w-[129px] border-t-[#a0a0a0] border-r-[#e0e0e0] border-b-[#e3e3e3] pt-[5px]" w={100}>Comment Viewer</Tab>
        <Tab className="w-[111px] border-t-[#a0a0a0] border-r-[#e0e0e0] border-b-[#e3e3e3] pt-[5px]" w={82}>Report Viewer</Tab>
      </div>
    </div>
  );
}

function Dot({ wide }: { wide?: boolean }) {
  return <div className={"absolute bottom-[1px] left-1/2 h-[4px] -translate-x-1/2 rounded-full " + (wide ? "w-5 bg-[#d8d8d8]" : "w-2 bg-[#9a9a9a]")} />;
}

function TaskApp({ children, dot = true, active }: { children: ReactNode; dot?: boolean; active?: boolean }) {
  return (
    <div className="flex w-[55px] shrink-0 justify-center">
      <div className={"relative flex h-[50px] w-[50px] items-center justify-center rounded-[5px] " + (active ? "border border-[#3c3c3c] bg-[#2f2f31]" : "")}>
        {children}
        {dot && <Dot wide={active} />}
      </div>
    </div>
  );
}

const PstArt = () => (
  <g stroke="#f2a91c" strokeWidth="1.400" fill="none">
    <path d="M2 4c5 5.500 11 3.500 16-.5C23 0 28 1 28 4.500c0 5-7 8.500-13 8C9 12 4 10 2 4z" />
    <path d="M8 7.500c6 1 10-3.500 15-3.500M4 12c6 5 17 3 23-4.500M8 16.500c6 3.500 14 1 18-5" />
  </g>
);

function Tile({ label, children }: { label: string; children: ReactNode }) {
  return (
    <div className="flex h-[30px] w-[30px] flex-col items-center bg-black">
      <svg width="30" height="19" viewBox="0 0 30 20" fill="none" stroke="#f2a91c" className="shrink-0">{children}</svg>
      <span className="text-[11px] leading-[11px] font-bold">{label}</span>
    </div>
  );
}

function Taskbar() {
  return (
    <div className="flex h-[58px] w-full shrink-0 items-center border-t border-[#3e4143] bg-[#202022] font-['Noto_Sans'] text-white">
      <div className="relative mt-[2px] ml-[25px] h-[34px] w-[35px] shrink-0">
        <svg width="35" height="36" viewBox="0 0 35 36" fill="none" className="absolute top-[-3px] left-0">
          <path d="M12 7l6-7 6 9z" fill="#6ec24a" /><path d="M3 10l17-3 4 18-19 4z" fill="#0c59c4" /><path d="M0 15l5 15 19-6V13z" fill="#1488d8" /><rect x="4" y="11" width="24" height="14" rx="2" fill="#20a8e0" /><circle cx="10.500" cy="17" r="4.500" fill="#fff" /><path d="M6.500 24c0-3 8-3 8 0z" fill="#fff" /><path d="M18 18h7M18 22h7" stroke="#bff0ff" strokeWidth="2" />
        </svg>
        <div className="absolute top-[-6px] left-[14px] flex h-[20px] w-[20px] items-center justify-center rounded-full bg-[#ff99a4] text-[13px] leading-none text-black">1</div>
      </div>
      <div className="mt-[-2px] ml-[4px] flex w-[521px] shrink-0 flex-col items-start text-[15px] leading-[20px]">
        <T w={89}>News for you</T>
        <T w={123} className="text-[#c9c9c9]">Social Security C...</T>
      </div>
      <div className="grid h-[29px] w-[29px] shrink-0 grid-cols-2 gap-px">
        <div className="bg-gradient-to-br from-[#7bdcfb] to-[#4cc6f8]" />
        <div className="bg-gradient-to-br from-[#5ccdfa] to-[#37b6f6]" />
        <div className="bg-gradient-to-br from-[#4cc4f8] to-[#22a6f4]" />
        <div className="bg-gradient-to-br from-[#37b6f6] to-[#0a92f2]" />
      </div>
      <div className="ml-[17px] flex h-[40px] w-[275px] shrink-0 items-center rounded-full border border-[#57545b] bg-[#413f45] pl-[14px]">
        <svg width="20" height="20" viewBox="0 0 20 20" fill="none"><circle cx="8.500" cy="8.500" r="6.800" stroke="#e6e6e6" strokeWidth="1.900" /><path d="M13.500 13.500L18 18.500" stroke="#e6e6e6" strokeWidth="2.300" /></svg>
        <T w={52} className="mt-px ml-[11px] text-[16px] leading-[22px] text-[#d2d2d2]">Search</T>
        <svg width="52" height="28" viewBox="0 0 52 28" fill="none" className="ml-[113px]">
          <path d="M4 0c-6 6-6 14 1 20L15 6C12 1 8-1 4 0z" fill="#7fbf3a" /><path d="M5 3c-3 5-3 9 1 14L13 7z" fill="#cdea8a" />
          <path d="M9 25C8 8 22-1 36 2c10 3 14 10 13 22z" fill="#b96a20" />
          <circle cx="17" cy="9" r="4" fill="#e6452c" /><circle cx="25" cy="4.500" r="3.500" fill="#4f9a2c" /><circle cx="33" cy="4.500" r="3.800" fill="#e6452c" /><circle cx="13" cy="15" r="3.500" fill="#5cae34" /><circle cx="40" cy="6" r="3.500" fill="#5cae34" /><circle cx="21" cy="12" r="3" fill="#f5c9a0" /><circle cx="45" cy="9" r="2.500" fill="#e6452c" />
          <path d="M13 26C14 18 24 9 36 9c10 0 16 9 14 16-3 4-30 4-37 1z" fill="#f6bb42" /><path d="M18 23C20 17 28 12 36 12.500" stroke="#ffdc84" strokeWidth="3" />
        </svg>
      </div>
      <div className="ml-[3px] flex">
        <TaskApp dot={false}><svg width="30" height="28" viewBox="0 0 30 28" className="-ml-[1px]"><rect x="8" y="0" width="22" height="19" rx="1.500" fill="#f0f0f0" /><rect x="0" y="7" width="22" height="20" rx="1.500" fill="#6a6a6a" fillOpacity=".85" /><rect x="8" y="7" width="14" height="12" fill="#bdbdbd" /></svg></TaskApp>
        <TaskApp><svg width="30" height="27" viewBox="0 0 30 27"><path d="M0 2a2 2 0 0 1 2-2h8l3 3.500h15a2 2 0 0 1 2 2V10H0z" fill="#e0a21a" /><rect y="5" width="30" height="21" rx="1.500" fill="#ffd04c" /><path d="M5 26.500V21a3 3 0 0 1 3-3h14a3 3 0 0 1 3 3v5.500z" fill="#1478c8" /><path d="M9 22.500h12" stroke="#0c4c8c" strokeWidth="1.600" /></svg></TaskApp>
        <TaskApp dot={false}>
          <div className="flex h-[27px] w-[27px] items-center justify-center bg-gradient-to-br from-[#fc4a6e] via-[#1c72f0] to-[#7a5af0]">
            <div className="flex h-[19px] w-[19px] flex-col bg-black pt-[3px] pl-[2px]"><span className="font-['DejaVu_Sans_Mono'] text-[10px] leading-[9px] font-bold">IJ</span><span className="mt-[3px] h-px w-[7px] bg-white" /></div>
          </div>
        </TaskApp>
        <TaskApp>
          <Tile label="WB"><path strokeWidth="1.200" d="M15 .5l4 2.300v4.500l-4 2.300-4-2.300V2.800zM10 9.500l4.500 2.300v5L10 19l-4.500-2.500v-4.700zM20 9.500l4.500 2.300v4.700L20 19l-4.500-2.200v-5zM15 5v4.500M11 2.800L15 5l4-2.200M5.500 11.800L10 14l4.500-2.200M15.500 11.800L20 14l4.500-2.200M10 14v5M20 14v5" /></Tile>
        </TaskApp>
        <TaskApp>
          <svg width="30" height="30" viewBox="0 0 30 30" fill="none"><path d="M1.500 28.500l2-7.500A13 13 0 1 1 9 26.500z" stroke="#25d366" strokeWidth="2.700" /><path d="M9 9c1.500-2.500 3-1.500 4 1.500.4 1-1.300 2-1 2.500 1 2 3 4 5 4.700.8.300 1.500-1.800 2.500-1.400 3 1.400 3.200 2 2 4-2 2.500-6 1.300-9-1.300C9.500 16 7.500 12 9 9z" fill="#25d366" /></svg>
          <div className="absolute top-[4px] right-[4px] flex h-[20px] w-[20px] items-center justify-center rounded-full bg-[#d6d6d6] text-[13px] leading-none text-black">3</div>
        </TaskApp>
        <TaskApp>
          <Tile label="M"><circle cx="11" cy="13" r="4" strokeWidth="1.700" /><circle cx="11" cy="13" r="5.400" strokeWidth="1.800" strokeDasharray="2.120 2.120" /><circle cx="21" cy="5" r="2.800" strokeWidth="1.500" /><circle cx="21" cy="5" r="4" strokeWidth="1.500" strokeDasharray="1.600 1.540" /></Tile>
        </TaskApp>
        <TaskApp>
          <svg width="30" height="30" viewBox="0 0 30 30"><defs><linearGradient id="edgeTop" x1="0" y1="0" x2="1" y2=".4"><stop offset="0" stopColor="#2aa8e8" /><stop offset=".6" stopColor="#36c8c8" /><stop offset="1" stopColor="#6ae85a" /></linearGradient></defs><circle cx="15" cy="15" r="15" fill="#1272c8" /><path d="M0 14C1 5 7 0 15 0c9 0 15 6 15 12 0 5-4 8-9 8-4 0-5-1.500-4-3 2-4-1-8-6-8-6 0-10 3-11 5z" fill="url(#edgeTop)" /><path d="M10 17c0 8 7 12 14 9.500 2-.7 3-1.500 4-2.500C24 31 14 32 9 27c-4-4-2-12 3-14-1 1-2 2-2 4z" fill="#0c4a94" /><path d="M29.500 20.500c-5 3.500-14.500 2-14.500-4.500 0-1 .5-2 1-3 2 1 3 2.500 2 4.500-1 1.500 1 2.500 4 2.500 2.500 0 6-1 8-4 .2 1.500 0 3.500-.5 4.500z" fill="#202022" /></svg>
        </TaskApp>
        <TaskApp active><Tile label="PST"><PstArt /></Tile></TaskApp>
      </div>
      <svg width="14" height="9" viewBox="0 0 14 9" fill="none" className="ml-[117px] shrink-0"><path d="M1 7.500l6-6 6 6" stroke="#fff" strokeWidth="1.700" /></svg>
      <svg width="22" height="22" viewBox="0 0 22 22" fill="none" className="ml-[22px] shrink-0"><path d="M1.500 8.500C4 0 15 0 18.500 6.500M19.500 1.500v6h-6M1.500 19.500v-5h5M2 15c1.500 3 4 4.500 7 4.500" stroke="#fff" strokeWidth="1.300" /><circle cx="15.500" cy="16" r="5" fill="#ff9d0a" /></svg>
      <svg width="21" height="14" viewBox="0 0 21 14" className="ml-[19px] shrink-0"><path d="M5 6a6 6 0 0 1 11-1l1 4z" fill="#9b9b9b" /><path d="M3.500 13.500a3.500 3.500 0 0 1 0-8c3 0 5 .5 10 4l-3 4z" fill="#d0d0d0" /><path d="M3.500 13.500L13 6.500c3-1.500 7 0 7.500 3.500.2 2-1 3.500-3 3.500z" fill="#fff" /></svg>
      <div className="mt-[-1px] ml-[21px] flex w-[32px] shrink-0 flex-col items-center text-[15px] leading-[20px]"><T w={29}>ENG</T><T w={14}>IN</T></div>
      <svg width="21" height="21" viewBox="0 0 21 21" fill="none" className="ml-[21px] shrink-0" stroke="#fff" strokeWidth="1.300"><path d="M13 1.500H1v13.500h13.500M18 8.500v8c0 1.500-1 2-3.500 2M5 19.500h9M7.500 15v4.500M11.500 15v4.500" /><rect x="15.500" y="1" width="4.500" height="7" rx="1" /><path d="M15.500 4.500H20" /></svg>
      <svg width="21" height="20" viewBox="0 0 21 20" fill="none" className="ml-[9px] shrink-0" stroke="#fff" strokeWidth="1.300"><path d="M1 7.500h3.500L9 3v14l-4.500-4.500H1zM12 7c1.500 2 1.500 4 0 6M14.500 4.500c3 3.500 3 7.500 0 11M17 2.500c4.500 5 4.500 10 0 15" /></svg>
      <svg width="21" height="17" viewBox="0 0 21 17" fill="none" className="ml-[9px] shrink-0"><path d="M6 3.500h10a2 2 0 0 1 2 2v8a2 2 0 0 1-2 2H4a2 2 0 0 1-2-2v-3" stroke="#fff" strokeWidth="1.300" /><path d="M5 13V9l3-3h7.500v7z" fill="#fff" /><path d="M19 7h1.500v5H19z" fill="#fff" /><path d="M4 0L0 6.500h2.500L1.500 11 6 4.500H3.500z" fill="#fff" /></svg>
      <div className="mt-[-2px] ml-[19px] flex w-[78px] shrink-0 flex-col items-end text-[15px] leading-[20px]"><T w={36}>09:37</T><T w={78}>16-05-2024</T></div>
      <svg width="17" height="19" viewBox="0 0 17 19" fill="none" className="ml-[11px] shrink-0"><path d="M1 14.500l1.800-3.500V7c0-8 11.400-8 11.400 0v4l1.800 3.500zM6 15.500c0 3 5 3 5 0" stroke="#fff" strokeWidth="1.300" /></svg>
      <div className="relative mt-[2px] ml-[20px] h-[29px] w-[30px] shrink-0">
        <svg width="30" height="29" viewBox="0 0 30 29"><defs><linearGradient id="copA" x1="0" y1="0" x2="0" y2="1"><stop offset="0" stopColor="#1c9cf0" /><stop offset=".6" stopColor="#3cc88a" /><stop offset="1" stopColor="#f4d42c" /></linearGradient><linearGradient id="copB" x1="0" y1="0" x2="0" y2="1"><stop offset="0" stopColor="#a65cf0" /><stop offset="1" stopColor="#f4705c" /></linearGradient></defs><path d="M8 2c1-2 2-2 4-2h6c-3 4-4 18-9 18H3c-3 0-3-3-2-6z" fill="url(#copA)" /><path d="M13 0h5c3 0 3 5 5 7h-8z" fill="#1848c8" /><path d="M20 7h6c3 0 3 3 2 6l-2 7H14c3-3 3-13 6-13z" fill="url(#copB)" /></svg>
        <div className="absolute bottom-0 left-[7px] flex h-[9px] w-[23px] items-center justify-center rounded-[3px] bg-[#ffc01c] text-[8.500px] leading-none font-bold text-black">PRE</div>
      </div>
    </div>
  );
}

export default function App() {
  return (
    <div className="flex h-[1078px] w-[1918px] flex-col overflow-hidden bg-[#101010] font-['DejaVu_Sans_Condensed','DejaVu_Sans',sans-serif] text-[13px] leading-[16px] text-black">
      <svg width="0" height="0" className="absolute">
        <defs>
          <linearGradient id="legendGrad" x1="0" y1="0" x2="0" y2="1">
            <stop offset="0" stopColor="#ff5ab0" /><stop offset=".35" stopColor="#f8f0a0" /><stop offset=".6" stopColor="#20e0a0" /><stop offset="1" stopColor="#20b8f8" />
          </linearGradient>
        </defs>
      </svg>
      <div className="flex h-[1020px] shrink-0 flex-col overflow-hidden rounded-b-[8px] bg-[#efefef]">
        <div className="flex h-[29px] shrink-0 items-start bg-[#f3f3f3]">
          <div className="ml-[9px] flex h-[20px] w-[20px] shrink-0 flex-col items-center bg-black">
            <svg width="20" height="13" viewBox="0 0 30 19"><PstArt /></svg>
            <span className="font-['Noto_Sans'] text-[8px] leading-[7px] font-bold text-white">PST</span>
          </div>
          <T w={225} className="ml-[6px] font-['Noto_Sans'] text-[15px] leading-[21px]">A6 : Fluid Flow (Fluent) - CFD-Post</T>
          <div className="ml-auto flex items-center gap-[46px] pt-[4px] pr-[22px]">
            <div className="h-px w-[12px] bg-black" />
            <div className="h-[12px] w-[12px] rounded-[1.500px] border border-black" />
            <svg width="12" height="12" viewBox="0 0 12 12"><path d="M.5 .5l11 11M11.500 .5l-11 11" stroke="#000" strokeWidth="1.100" /></svg>
          </div>
        </div>
        <div className="flex h-[22px] shrink-0 items-center gap-[16px] bg-white pt-[2px] pl-[8px]">
          <T w={20}>File</T><T w={21}>Edit</T><T w={43}>Monitor</T><T w={44}>Session</T><T w={33}>Insert</T><T w={31}>Tools</T><T w={25}>Help</T>
        </div>
        <Toolbar />
        <div className="flex h-[904px] shrink-0">
          <div className="flex w-[710px] flex-col">
            <div className="ml-[3px] flex h-[903px] flex-col border-r border-b border-l border-[#e0e0e0] pt-[3px]">
              <div className="flex h-[24px] shrink-0 items-end">
                <div className="flex h-[23px] w-[70px] items-center justify-center border border-b-0 border-[#e2e2e2] bg-[#f9f9f9] pr-[2px]"><T w={40}>Outline</T></div>
                <Tab className="w-[82px] border-t-[#e3e3e3] border-r-[#e0e0e0] border-b-[#a0a0a0] pt-px" w={53}>Variables</Tab>
                <Tab className="w-[98px] border-t-[#e3e3e3] border-r-[#e0e0e0] border-b-[#a0a0a0] pt-px" w={67}>Expressions</Tab>
                <Tab className="w-[93px] border-t-[#e3e3e3] border-r-[#e0e0e0] border-b-[#a0a0a0] pt-px" w={63}>Calculators</Tab>
                <Tab className="w-[62px] border-t-[#e3e3e3] border-r-[#e0e0e0] border-b-[#a0a0a0] pt-px" w={34}>Turbo</Tab>
              </div>
              <div className="h-px shrink-0" />
              <Outline />
              <Details />
            </div>
          </div>
          <ViewerPane />
        </div>
        <div className="flex grow items-end justify-end pr-[3px] pb-[3px]">
          <svg width="10" height="8" viewBox="0 0 10 8" fill="#b8b8b8"><path d="M7 0h2v2H7zM3.500 0h2v2h-2zM7 3h2v2H7zM3.500 3h2v2h-2zM0 3h2v2H0z" transform="translate(0 2)" /></svg>
        </div>
      </div>
      <Taskbar />
    </div>
  );
}
